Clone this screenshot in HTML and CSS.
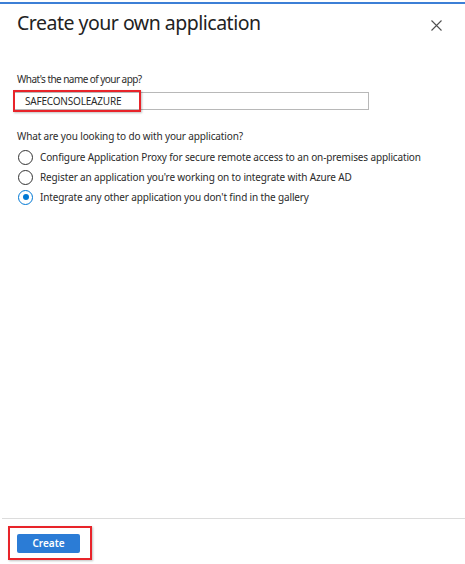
FILE: index.html
```html
<!DOCTYPE html>
<html>
<head>
<meta charset="utf-8">
<link rel="stylesheet" href="styles.css">
</head>
<body>
<div class="panel">
  <div class="header">
    <h1 class="title">Create your own application</h1>
    <button class="close" aria-label="Close">
      <svg width="11" height="11" viewBox="0 0 11 11"><path d="M0.5 0.5L10.5 10.5M10.5 0.5L0.5 10.5" stroke="#505050" stroke-width="1.1" fill="none"/></svg>
    </button>
  </div>
  <div class="content">
    <label class="label name-label">What's the name of your app?</label>
    <div class="input-wrap">
      <div class="input">SAFECONSOLEAZURE</div>
      <div class="highlight highlight-input"></div>
    </div>
    <div class="label question">What are you looking to do with your application?</div>
    <div class="options">
      <div class="option"><span class="radio"></span><span>Configure Application Proxy for secure remote access to an on-premises application</span></div>
      <div class="option"><span class="radio"></span><span>Register an application you're working on to integrate with Azure AD</span></div>
      <div class="option"><span class="radio checked"></span><span>Integrate any other application you don't find in the gallery</span></div>
    </div>
  </div>
  <div class="footer">
    <div class="btn-wrap">
      <button class="create">Create</button>
      <div class="highlight highlight-btn"></div>
    </div>
  </div>
</div>
</body>
</html>
```
FILE: styles.css
```css
* { box-sizing: border-box; }
html, body { margin: 0; padding: 0; background: #fff; }
body { font-family: "Noto Sans", "Open Sans", sans-serif; color: #2b2b2b; }
.panel {
  height: 564px;
  display: flex;
  flex-direction: column;
  padding-top: 2px;
}
.header {
  border-top: 2px solid #3c7fd6;
  display: flex;
  align-items: flex-start;
  justify-content: space-between;
  padding: 5px 23px 0 17px;
}
.title {
  margin: 0;
  font-size: 19.5px;
  font-weight: 400;
  line-height: 28px;
  color: #222;
  letter-spacing: -0.5px;
}
.close {
  border: 0;
  background: none;
  padding: 0;
  margin-top: 11px;
  width: 11px;
  height: 11px;
  display: flex;
}
.content {
  flex: 1;
  padding: 35px 17px 0 17px;
  font-size: 10px;
  letter-spacing: -0.14px;
}
.label { display: block; line-height: 14px; color: #2b2b2b; }
.name-label { letter-spacing: -0.55px; }
.input-wrap {
  position: relative;
  width: 355px;
  margin: 6px 0 0 -3px;
}
.input {
  height: 18px;
  border: 1px solid #b8b8b8;
  padding: 0 10px;
  line-height: 16px;
  font-size: 10px;
  letter-spacing: -0.2px;
  color: #2b2b2b;
}
.highlight {
  position: absolute;
  border: 2px solid #e8242a;
  box-shadow: 1px 1px 2px rgba(0,0,0,0.25);
}
.highlight-input { left: -1px; top: -2px; width: 128px; height: 22px; }
.question { margin-top: 19px; }
.options { display: flex; flex-direction: column; gap: 6px; margin-top: 7px; margin-left: 1px; }
.option { display: flex; align-items: center; gap: 7px; height: 14px; line-height: 14px; white-space: nowrap; }
.radio {
  width: 15px; height: 15px;
  border: 1px solid #333;
  border-radius: 50%;
  flex: none;
  position: relative;
}
.radio.checked { border-color: #0078d4; }
.radio.checked::after {
  content: "";
  position: absolute;
  left: 3.5px; top: 3.5px;
  width: 6px; height: 6px;
  border-radius: 50%;
  background: #0078d4;
}
.footer {
  border-top: 1px solid #dcdcdc;
  margin-left: 2px;
  height: 46px;
  padding: 15px 0 0 15px;
}
.btn-wrap { position: relative; width: 63px; }
.create {
  display: block;
  width: 63px;
  height: 19px;
  border: 0;
  border-radius: 2px;
  background: #2b7cd6;
  color: #fff;
  font-family: "Noto Sans", "Open Sans", sans-serif;
  font-size: 10px;
  font-weight: 600;
  padding: 0;
  line-height: 19px;
}
.highlight-btn { left: -9px; top: -8px; width: 84px; height: 34px; }
```
